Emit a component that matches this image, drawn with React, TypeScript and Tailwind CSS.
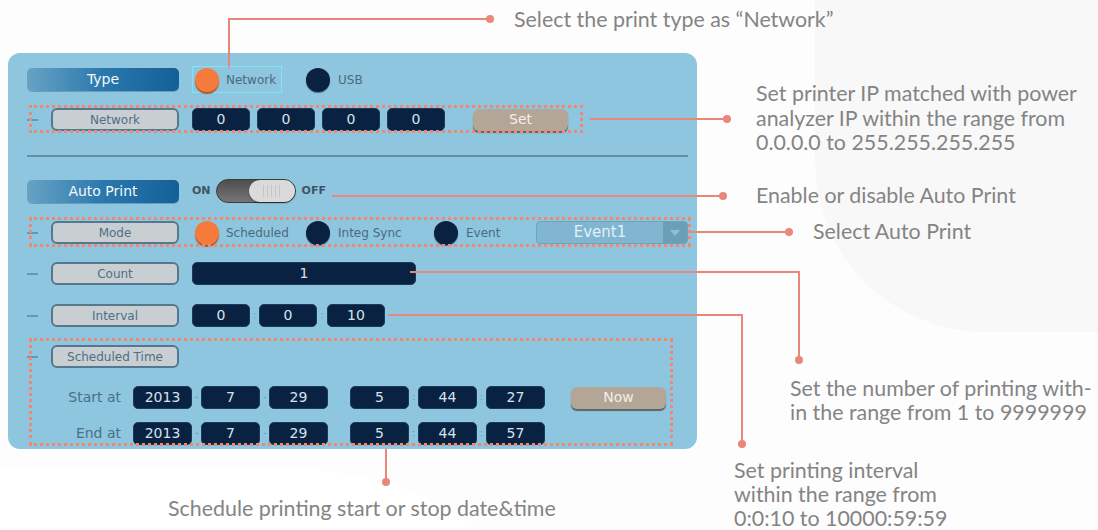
import type { ReactNode } from "react";

type Kids = { children?: ReactNode };

function Dash() {
  return <span className="mr-[13px] h-[2px] w-[11px] shrink-0 bg-[#6b95ad]" />;
}

function Pill({ children }: Kids) {
  return (
    <div className="flex h-[23px] w-[152px] shrink-0 items-center justify-center rounded-[5px] bg-linear-to-r from-[#66a3c5] via-[#2a78ad] to-[#135f98] text-[14px] text-[#f4f8fb] shadow-[0_1px_0_rgba(0,40,80,0.25)]">
      {children}
    </div>
  );
}

function Label({ children }: Kids) {
  return (
    <div className="flex h-[23px] w-[128px] shrink-0 items-center justify-center rounded-[6px] border-2 border-[#55788d] bg-[#c9ced3] text-[12px] text-[#4f6f84]">
      {children}
    </div>
  );
}

function Cell({ className, children }: Kids & { className: string }) {
  return (
    <div
      className={`flex h-[23px] shrink-0 items-center justify-center rounded-[5px] border border-[#1d3a5a] bg-[#0a2241] text-[14px] text-[#d5e2ee] ${className}`}
    >
      {children}
    </div>
  );
}

function Radio({ on }: { on?: boolean }) {
  return on ? (
    <span className="h-[24px] w-[24px] shrink-0 rounded-full bg-[#f47b3b] shadow-[0_2px_1px_#a95a2e]" />
  ) : (
    <span className="h-[24px] w-[24px] shrink-0 rounded-full bg-[#0a2140] shadow-[0_1px_1px_#3f6d88]" />
  );
}

function Sep({ ch }: { ch: string }) {
  return <span className="flex w-[9px] shrink-0 justify-center text-[9px] text-[#5f93b0]">{ch}</span>;
}

function TanButton({ children }: Kids) {
  return (
    <div className="flex h-[22px] w-[95px] shrink-0 items-center justify-center rounded-[6px] bg-[#b4a697] text-[14px] text-[#f3eee8] shadow-[0_2px_1px_#5f6468]">
      {children}
    </div>
  );
}

function DateTimeRow({ label, values }: { label: string; values: string[] }) {
  return (
    <div className="flex h-[23px] items-center">
      <span className="w-[106px] shrink-0 pr-[12px] text-right text-[14px] text-[#4b6f87]">{label}</span>
      <Cell className="w-[59px]">{values[0]}</Cell>
      <Sep ch="-" />
      <Cell className="w-[59px]">{values[1]}</Cell>
      <Sep ch="-" />
      <Cell className="w-[59px]">{values[2]}</Cell>
      <span className="w-[22px] shrink-0" />
      <Cell className="w-[59px]">{values[3]}</Cell>
      <Sep ch=":" />
      <Cell className="w-[59px]">{values[4]}</Cell>
      <Sep ch=":" />
      <Cell className="w-[59px]">{values[5]}</Cell>
    </div>
  );
}

function Panel() {
  return (
    <div className="flex h-[396px] w-[689px] flex-col overflow-hidden rounded-[12px] bg-[#8dc6de] pl-[19px] pt-[13px]">
      {/* Type */}
      <div className="flex h-[27px] items-center">
        <Pill>Type</Pill>
        <div className="ml-[13px] flex h-[27px] w-[90px] items-center gap-[7px] border border-[#7fe6f2] pl-[2px]">
          <Radio on />
          <span className="text-[12px] text-[#4b6a80]">Network</span>
        </div>
        <div className="ml-[24px] flex items-center gap-[8px]">
          <Radio />
          <span className="text-[12px] text-[#4b6a80]">USB</span>
        </div>
      </div>

      {/* Network */}
      <div className="mt-[15px] flex h-[23px] items-center">
        <Dash />
        <Label>Network</Label>
        <div className="ml-[13px] flex gap-[7px]">
          <Cell className="w-[58px]">0</Cell>
          <Cell className="w-[58px]">0</Cell>
          <Cell className="w-[58px]">0</Cell>
          <Cell className="w-[58px]">0</Cell>
        </div>
        <div className="ml-[28px]">
          <TanButton>Set</TanButton>
        </div>
      </div>

      <div className="mt-[24px] h-[2px] w-[661px] bg-[#628fa7]" />

      {/* Auto Print */}
      <div className="mt-[22px] flex h-[24px] items-center">
        <Pill>Auto Print</Pill>
        <span className="ml-[13px] text-[11px] font-bold text-[#3d5566]">ON</span>
        <div className="ml-[5px] flex h-[24px] w-[80px] justify-end rounded-full border border-[#3c3c3c] bg-linear-to-b from-[#4e4e4e] to-[#767676]">
          <div className="flex h-full w-[46px] items-center justify-center gap-[3px] rounded-full bg-[#dadada] shadow-[0_1px_2px_rgba(0,0,0,0.4)]">
            <span className="h-[12px] w-px bg-[#c4c4c4]" />
            <span className="h-[12px] w-px bg-[#c4c4c4]" />
            <span className="h-[12px] w-px bg-[#c4c4c4]" />
            <span className="h-[12px] w-px bg-[#c4c4c4]" />
            <span className="h-[12px] w-px bg-[#c4c4c4]" />
          </div>
        </div>
        <span className="ml-[6px] text-[11px] font-bold text-[#3d5566]">OFF</span>
      </div>

      {/* Mode */}
      <div className="mt-[18px] flex h-[23px] items-center">
        <Dash />
        <Label>Mode</Label>
        <div className="ml-[16px] flex w-[111px] items-center gap-[7px]">
          <Radio on />
          <span className="text-[12px] text-[#4b6a80]">Scheduled</span>
        </div>
        <div className="flex w-[128px] items-center gap-[8px]">
          <Radio />
          <span className="text-[12px] text-[#4b6a80]">Integ Sync</span>
        </div>
        <div className="flex w-[102px] items-center gap-[8px]">
          <Radio />
          <span className="text-[12px] text-[#4b6a80]">Event</span>
        </div>
        <div className="flex h-[23px] w-[152px] overflow-hidden rounded-[4px] border border-[#6fa3bc] bg-[#80b6cf]">
          <span className="flex flex-1 items-center justify-center text-[15px] text-[#e3f1f8]">Event1</span>
          <span className="flex w-[24px] items-center justify-center bg-[#6a9fb8]">
            <svg width="10" height="6" viewBox="0 0 10 6">
              <path d="M0 0 L10 0 L5 6 Z" fill="#8fc0d6" />
            </svg>
          </span>
        </div>
      </div>

      {/* Count */}
      <div className="mt-[18px] flex h-[23px] items-center">
        <Dash />
        <Label>Count</Label>
        <Cell className="ml-[13px] w-[224px]">1</Cell>
      </div>

      {/* Interval */}
      <div className="mt-[19px] flex h-[23px] items-center">
        <Dash />
        <Label>Interval</Label>
        <Cell className="ml-[13px] w-[58px]">0</Cell>
        <Sep ch=":" />
        <Cell className="w-[58px]">0</Cell>
        <span className="flex w-[10px] shrink-0 justify-center text-[9px] text-[#5f93b0]">:</span>
        <Cell className="w-[58px]">10</Cell>
      </div>

      {/* Scheduled Time */}
      <div className="mt-[18px] flex h-[23px] items-center">
        <Dash />
        <Label>Scheduled Time</Label>
      </div>

      <div className="mt-[18px] flex items-center">
        <DateTimeRow label="Start at" values={["2013", "7", "29", "5", "44", "27"]} />
        <div className="ml-[26px]">
          <TanButton>Now</TanButton>
        </div>
      </div>
      <div className="mt-[13px]">
        <DateTimeRow label="End at" values={["2013", "7", "29", "5", "44", "57"]} />
      </div>
    </div>
  );
}

export default function App() {
  return (
    <div className="relative h-[530px] w-[1098px] overflow-hidden bg-[#fdfdfd] pl-[8px] pt-[53px] font-['DejaVu_Sans',sans-serif]">
      {/* soft background swooshes */}
      <div className="pointer-events-none absolute left-[815px] top-[-200px] h-[532px] w-[600px] rounded-[170px] bg-[#f8f8f8]" />
      <div className="pointer-events-none absolute left-[-300px] top-[470px] h-[600px] w-[900px] rounded-full bg-white" />

      <div className="relative">
        <Panel />
      </div>

      {/* dotted highlight frames */}
      <div className="absolute left-[29px] top-[105px] h-[28px] w-[554px] border-[3px] border-dotted border-[#f2866f]" />
      <div className="absolute left-[29px] top-[217px] h-[30px] w-[662px] border-[3px] border-dotted border-[#f2866f]" />
      <div className="absolute left-[29px] top-[338px] h-[108px] w-[644px] border-[3px] border-dotted border-[#f2866f]" />

      {/* callout lines */}
      <div className="absolute left-[228px] top-[18px] h-[49px] w-[2px] bg-[#e8877a]" />
      <div className="absolute left-[228px] top-[18px] h-[2px] w-[262px] bg-[#e8877a]" />
      <div className="absolute left-[486px] top-[15px] h-[8px] w-[8px] rounded-full bg-[#e8877a]" />

      <div className="absolute left-[590px] top-[118px] h-[2px] w-[137px] bg-[#e8877a]" />
      <div className="absolute left-[723px] top-[115px] h-[8px] w-[8px] rounded-full bg-[#e8877a]" />

      <div className="absolute left-[332px] top-[195px] h-[2px] w-[391px] bg-[#e8877a]" />
      <div className="absolute left-[719px] top-[192px] h-[8px] w-[8px] rounded-full bg-[#e8877a]" />

      <div className="absolute left-[691px] top-[231px] h-[2px] w-[98px] bg-[#e8877a]" />
      <div className="absolute left-[785px] top-[228px] h-[8px] w-[8px] rounded-full bg-[#e8877a]" />

      <div className="absolute left-[410px] top-[271px] h-[2px] w-[390px] bg-[#e8877a]" />
      <div className="absolute left-[798px] top-[271px] h-[89px] w-[2px] bg-[#e8877a]" />
      <div className="absolute left-[795px] top-[356px] h-[8px] w-[8px] rounded-full bg-[#e8877a]" />

      <div className="absolute left-[388px] top-[314px] h-[2px] w-[355px] bg-[#e8877a]" />
      <div className="absolute left-[741px] top-[314px] h-[130px] w-[2px] bg-[#e8877a]" />
      <div className="absolute left-[738px] top-[440px] h-[8px] w-[8px] rounded-full bg-[#e8877a]" />

      <div className="absolute left-[385px] top-[449px] h-[33px] w-[2px] bg-[#e8877a]" />
      <div className="absolute left-[382px] top-[478px] h-[8px] w-[8px] rounded-full bg-[#e8877a]" />

      {/* callout texts */}
      <div className="absolute inset-0 font-['Lato',sans-serif] text-[21.4px] text-[#848484]">
        <p className="absolute left-[514px] top-[7px] leading-[24px]">Select the print type as “Network”</p>
        <p className="absolute left-[756px] top-[81px] leading-[24.5px]">
          Set printer IP matched with power
          <br />
          analyzer IP within the range from
          <br />
          0.0.0.0 to 255.255.255.255
        </p>
        <p className="absolute left-[756px] top-[183px] leading-[24px]">Enable or disable Auto Print</p>
        <p className="absolute left-[813px] top-[219px] leading-[24px]">Select Auto Print</p>
        <p className="absolute left-[790px] top-[376px] leading-[24px]">
          Set the number of printing with-
          <br />
          in the range from 1 to 9999999
        </p>
        <p className="absolute left-[734px] top-[458px] leading-[24px]">
          Set printing interval
          <br />
          within the range from
          <br />
          0:0:10 to 10000:59:59
        </p>
        <p className="absolute left-[168px] top-[496px] leading-[24px]">Schedule printing start or stop date&amp;time</p>
      </div>
    </div>
  );
}
